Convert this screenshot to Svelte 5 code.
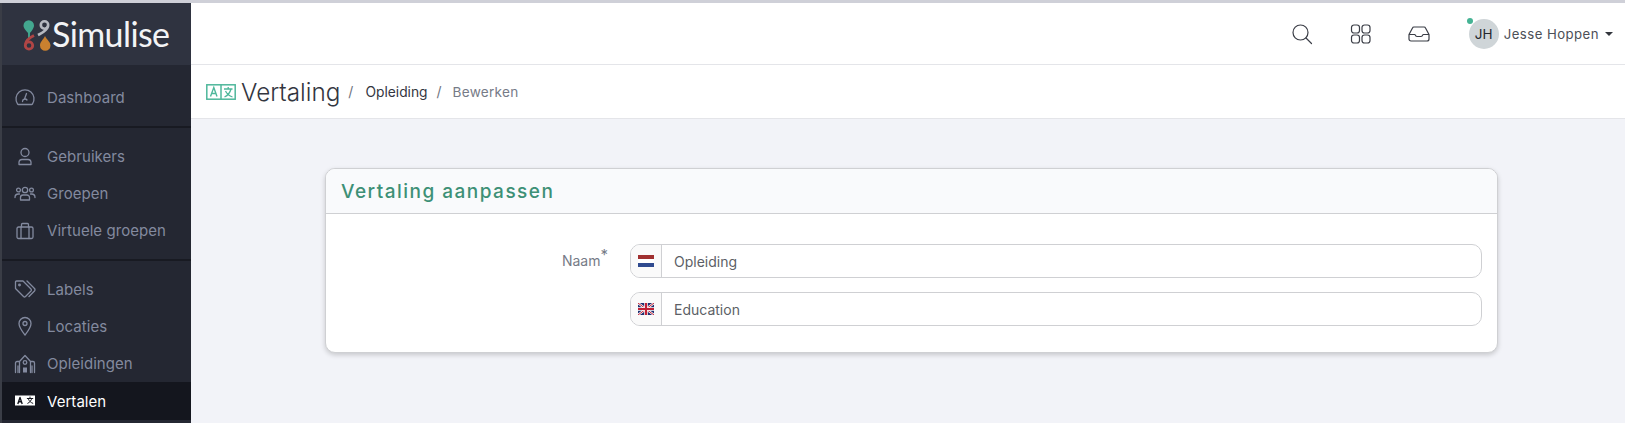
<script>
  const groups = [
    [{ label: 'Dashboard', icon: 'dash' }],
    [{ label: 'Gebruikers', icon: 'user' }, { label: 'Groepen', icon: 'group' }, { label: 'Virtuele groepen', icon: 'case' }],
    [{ label: 'Labels', icon: 'tag' }, { label: 'Locaties', icon: 'pin' }, { label: 'Opleidingen', icon: 'school' }, { label: 'Vertalen', icon: 'trans', active: true }]
  ];
</script>

<div class="page">
  <aside class="sidebar">
    <div class="logo">
      <svg class="mark" width="30" height="32" viewBox="0 0 30 32">
        <path d="M7 13.5 L7 19" stroke="#3f9f8a" stroke-width="2" />
        <path d="M7 15 C2 10 1.5 8 1.5 6.5 A5.2 5.2 0 0 1 12 6.5 C12 8 11 11 7 15Z" fill="#43a78f" />
        <circle cx="22.500" cy="6" r="3.700" fill="none" stroke="#b6b9c0" stroke-width="2.600" />
        <path d="M26 7 C25 12 20 14 16 16" fill="none" stroke="#b6b9c0" stroke-width="2.600" />
        <circle cx="7" cy="26.500" r="3.700" fill="none" stroke="#b04545" stroke-width="2.800" />
        <path d="M3.500 25 C4 21 8 18.500 12 16.500" fill="none" stroke="#b04545" stroke-width="2.800" />
        <path d="M23 17 C25 21 28.500 23 28.500 26.500 A5.200 5.200 0 0 1 18 26.500 C18 23 21 21 23 17Z" fill="#c9802f" />
      </svg>
      <span class="brand">Simulise</span>
    </div>
    <nav>
      {#each groups as group, g}
        <div class="group" class:first={g === 0}>
          {#each group as item}
            <div class="item" class:active={item.active}>
              <svg class="ni" width="22" height="22" viewBox="0 0 22 22" fill="none" stroke="currentColor" stroke-width="1.300" stroke-linecap="round" stroke-linejoin="round">
                {#if item.icon === 'dash'}
                  <path d="M4.500 17.500 A1.500 1.500 0 0 1 3.500 16.800 A9 9 0 1 1 18.500 16.800 A1.500 1.500 0 0 1 17.500 17.500Z" /><path d="M10.500 12 L12.500 6.500" /><path d="M8.500 14.500 A2.500 2.500 0 0 1 13 13" />
                {:else if item.icon === 'user'}
                  <circle cx="11" cy="6.500" r="4" /><path d="M5 18.500 V16 A3 3 0 0 1 8 13.500 H14 A3 3 0 0 1 17 16 V18.500Z" />
                {:else if item.icon === 'group'}
                  <circle cx="11" cy="7" r="2.700" /><circle cx="4.500" cy="7" r="1.900" /><circle cx="17.500" cy="7" r="1.900" /><path d="M6.500 17 V14.500 A2.500 2.500 0 0 1 9 12 H13 A2.500 2.500 0 0 1 15.500 14.500 V17Z" /><path d="M1 14.500 C1 12 2.500 11 4.500 11 H5.500 M21 14.500 C21 12 19.500 11 17.500 11 H16.500" />
                {:else if item.icon === 'case'}
                  <rect x="3" y="7" width="16" height="11.500" rx="1.500" /><path d="M7 18.500 V7 M15 18.500 V7 M7.500 7 V4.500 A1 1 0 0 1 8.500 3.500 H13.500 A1 1 0 0 1 14.500 4.500 V7" />
                {:else if item.icon === 'tag'}
                  <path d="M1.500 3 A1 1 0 0 1 2.500 2 H9 L17 10 A1.500 1.500 0 0 1 17 12 L11.500 17.500 A1.500 1.500 0 0 1 9.500 17.500 L1.500 9.500Z" /><path d="M13 2 L20.500 9.500 A2 2 0 0 1 20.500 12 L15 17.500" /><circle cx="5.500" cy="6" r=".8" />
                {:else if item.icon === 'pin'}
                  <path d="M11 19 C7.500 14.500 5 11.500 5 7.500 A6 6 0 0 1 17 7.500 C17 11.500 14.500 14.500 11 19Z" /><circle cx="11" cy="7.500" r="2" />
                {:else if item.icon === 'school'}
                  <path d="M5.500 19.500 V8.500 L11 2.500 L16.500 8.500 V19.500" /><circle cx="11" cy="9.500" r="1.800" /><path d="M5 8.500 H3 A1.500 1.500 0 0 0 1.500 10 V19.500 M17 8.500 H19 A1.500 1.500 0 0 1 20.500 10 V19.500 M4 13 V19.500 M18 13 V19.500" /><rect x="9" y="14.500" width="4" height="5" fill="currentColor" stroke="none" />
                {:else}
                  <path d="M1 5.500 H11 V15.500 H1Z M11 5.500 H21 V15.500 H11Z" fill="currentColor" stroke="none" /><path d="M12.300 6.800 H19.800 V14.300 H12.300Z" fill="#fff" stroke="none" /><path d="M3.800 14 L6 7.500 L8.200 14 M4.700 11.800 H7.300" stroke="#14161e" stroke-width="1.400" stroke-linecap="butt" /><path d="M13.300 8.500 H18.800 M16 7 V8.500 M17.800 8.500 C17.300 10.500 15.800 12.300 13.800 13.300 M14.600 9.500 C15.300 11.300 16.800 12.500 18.800 13.300" stroke="#14161e" stroke-width="1" />
                {/if}
              </svg>
              <span>{item.label}</span>
            </div>
          {/each}
        </div>
      {/each}
    </nav>
  </aside>

  <main class="main">
    <header class="topbar">
      <svg class="ti" width="22" height="22" viewBox="0 0 22 22" fill="none" stroke="#3b3e47" stroke-width="1.200" stroke-linecap="round">
        <circle cx="9.500" cy="9.500" r="7.500" /><path d="M15 15 L20.500 20.500" />
      </svg>
      <svg class="ti" width="22" height="22" viewBox="0 0 22 22" fill="none" stroke="#3b3e47" stroke-width="1.200">
        <rect x="1.500" y="2" width="8" height="8" rx="2.500" /><rect x="12" y="2" width="8" height="8" rx="2.500" /><rect x="1.500" y="12" width="8" height="8" rx="2.500" /><rect x="12" y="12" width="8" height="8" rx="2.500" />
      </svg>
      <svg class="ti" width="22" height="22" viewBox="0 0 22 22" fill="none" stroke="#3b3e47" stroke-width="1.200" stroke-linejoin="round">
        <path d="M1 11.500 L4.500 5 A1.500 1.500 0 0 1 6 4 H16 A1.500 1.500 0 0 1 17.500 5 L21 11.500 V16 A2 2 0 0 1 19 18 H3 A2 2 0 0 1 1 16Z" /><path d="M1 11.500 H7 A2.500 2.500 0 0 0 9 13.500 H13 A2.500 2.500 0 0 0 15 11.500 H21" />
      </svg>
      <div class="userbox">
        <div class="avatar">JH<i class="dot"></i></div>
        <span class="uname">Jesse Hoppen</span>
        <i class="caret"></i>
      </div>
    </header>

    <div class="crumbs">
      <svg width="30" height="16" viewBox="0 0 30 16" fill="none" stroke="#4fb79b" stroke-width="1.500">
        <rect x=".8" y=".8" width="28.400" height="14.400" />
        <path d="M15 .6 V15.400" />
        <path d="M4.500 12.500 L7.800 3.500 L11 12.500 M5.700 9.500 H9.900" stroke-width="1.400" />
        <path d="M18 5 H26.500 M22.200 3 V5 M25 5 C24 9 21.500 11.500 18.500 13 M19.500 7 C21 10 23.500 12 26.500 13" stroke-width="1.300" />
      </svg>
      <h1>Vertaling</h1>
      <span class="sep first">/</span>
      <span class="crumb">Opleiding</span>
      <span class="sep">/</span>
      <span class="crumb muted">Bewerken</span>
    </div>

    <section class="content">
      <div class="card">
        <div class="card-head">Vertaling aanpassen</div>
        <div class="card-body">
          <div class="label">Naam<sup>*</sup></div>
          <div class="fields">
            <div class="input">
              <div class="addon">
                <svg width="16" height="12" viewBox="0 0 16 12"><rect width="16" height="4" fill="#a03030" /><rect y="4" width="16" height="4" fill="#fff" /><rect y="8" width="16" height="4" fill="#2f4a8f" /></svg>
              </div>
              <div class="value">Opleiding</div>
            </div>
            <div class="input">
              <div class="addon">
                <svg width="16" height="12" viewBox="0 0 16 12">
                  <rect width="16" height="12" fill="#1f2f70" />
                  <path d="M0 0 L16 12 M16 0 L0 12" stroke="#fff" stroke-width="2.200" />
                  <path d="M0 0 L16 12 M16 0 L0 12" stroke="#c02035" stroke-width="1" />
                  <path d="M8 0 V12 M0 6 H16" stroke="#fff" stroke-width="3.600" />
                  <path d="M8 0 V12 M0 6 H16" stroke="#c02035" stroke-width="2.200" />
                </svg>
              </div>
              <div class="value">Education</div>
            </div>
          </div>
        </div>
      </div>
    </section>
  </main>
</div>

<style>
  :global(body) { margin: 0; background: #f2f3f8; overflow: hidden; }
  .page {
    display: flex; height: 423px; box-sizing: border-box;
    border-top: 3px solid #cfd0d8;
    font-family: Inter, "Liberation Sans", sans-serif;
    overflow: hidden;
  }
  .sidebar { width: 191px; flex: none; background: #242732; box-sizing: border-box; border-left: 2px solid #3a3d46; display: flex; flex-direction: column; }
  .logo { height: 62px; flex: none; background: #2f3340; display: flex; align-items: center; padding-left: 20px; gap: 0; box-sizing: border-box; }
  .mark { flex: none; margin-top: 1px; }
  .brand { color: #f3f4f6; font-size: 34px; line-height: 1; font-family: Lato, sans-serif; font-weight: 400; letter-spacing: -.6px; }
  .group { padding: 10px 0; border-top: 2px solid #181a22; }
  .group.first { border-top: 0; padding: 14px 0 10px; }
  .item { height: 37px; display: flex; align-items: center; padding-left: 12px; color: #838a9f; font-size: 15px; letter-spacing: .05px; box-sizing: border-box; }
  .ni { flex: none; margin-right: 11px; }
  .item.active { background: #14161e; color: #fff; height: 38px; }
  .main { flex: 1; min-width: 0; display: flex; flex-direction: column; }
  .topbar { height: 62px; flex: none; box-sizing: border-box; background: #fff; border-bottom: 1px solid #e4e5e9; display: flex; align-items: center; justify-content: flex-end; padding-right: 12px; }
  .ti { margin-left: 36px; flex: none; }
  .ti:first-child { margin-left: 0; margin-right: 1px; }
  .userbox { display: flex; align-items: center; margin-left: 39px; }
  .avatar { position: relative; width: 30px; height: 30px; border-radius: 50%; background: #cfd5d8; color: #25272d; font-size: 13.500px; display: flex; align-items: center; justify-content: center; }
  .dot { position: absolute; left: -2px; top: -1px; width: 6px; height: 6px; border-radius: 50%; background: #45b394; }
  .uname { margin-left: 5px; font-size: 13.200px; color: #4c4f57; letter-spacing: .45px; }
  .caret { margin-left: 6px; width: 0; height: 0; border: 4.500px solid transparent; border-top: 4.500px solid #33363d; border-bottom: 0; }
  .crumbs { height: 54px; flex: none; box-sizing: border-box; background: #fff; border-bottom: 1px solid #e4e5e9; display: flex; align-items: center; padding-left: 15px; }
  h1 { margin: 0 0 0 5px; font-size: 24.300px; font-weight: 300; color: #33363f; letter-spacing: 0; }
  .sep { color: #6f7480; font-size: 14px; margin: 0 10px 0 9px; }
  .sep.first { margin-left: 8px; margin-right: 12px; }
  .crumb { font-size: 13.800px; color: #33363f; }
  .crumb.muted { font-size: 13.600px; color: #767b87; letter-spacing: .25px; margin-left: 1px; }
  .content { flex: 1; padding: 49px 127px 0 134px; }
  .card { background: #fff; border: 1px solid #cfd0d3; border-radius: 10px; box-shadow: 0 2px 5px rgba(0,0,0,.18); overflow: hidden; }
  .card-head { height: 45px; box-sizing: border-box; background: #f9fafc; border-bottom: 1px solid #cfd0d3; padding: 0 15px; display: flex; align-items: center; font-size: 19px; font-weight: 500; letter-spacing: 1.480px; color: #3d9076; }
  .card-body { display: flex; padding: 30px 15px 26px; }
  .label { width: 256px; margin-left: 33px; padding-right: 22px; flex: none; text-align: right; font-size: 14px; color: #767b87; padding-top: 8px; box-sizing: border-box; }
  .label sup { font-size: 15px; line-height: 0; margin-left: 0; vertical-align: 6px; }
  .fields { flex: 1; margin-left: 0; display: flex; flex-direction: column; gap: 14px; }
  .input { height: 34px; box-sizing: border-box; border: 1px solid #cfd0d3; border-radius: 10px; display: flex; overflow: hidden; background: #fff; }
  .addon { width: 31px; flex: none; box-sizing: border-box; background: #fafafa; border-right: 1px solid #cfd0d3; display: flex; align-items: center; justify-content: center; padding-bottom: 1px; }
  .value { padding-left: 12px; display: flex; align-items: center; font-size: 14px; color: #5c5f66; letter-spacing: 0; }
</style>
